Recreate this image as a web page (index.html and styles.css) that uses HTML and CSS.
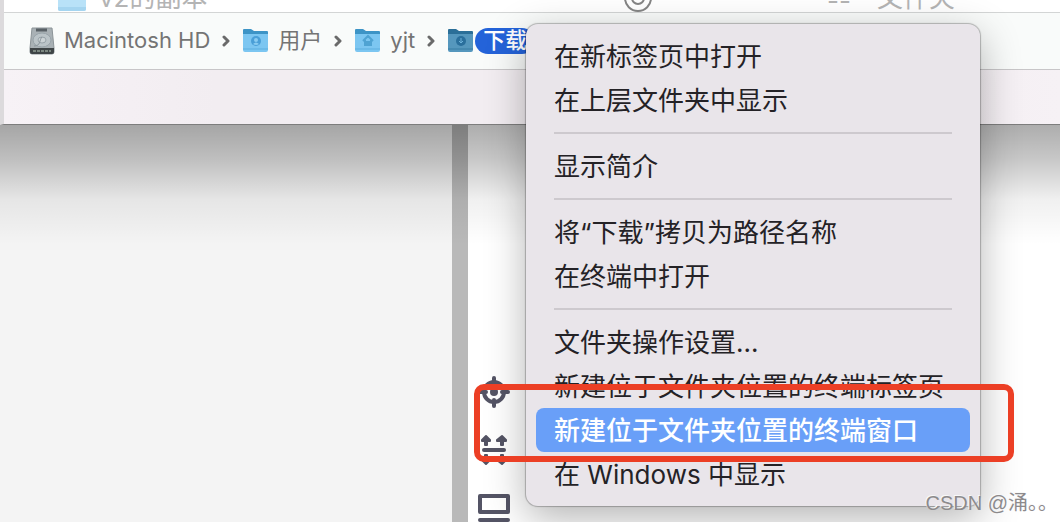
FILE: index.html
```html
<!DOCTYPE html>
<html lang="zh-CN">
<head>
    <meta charset="UTF-8">
    <meta name="viewport" content="width=device-width, initial-scale=1.0">
    <title>访达</title>
    <link rel="stylesheet" href="styles.css">
</head>
<body>
    <section class="finder">
        <div class="file-row">
            <svg class="file-folder" width="30" height="24" viewBox="0 0 30 24"><path d="M1 0h28v21a2 2 0 0 1-2 2H3a2 2 0 0 1-2-2z" fill="#b9e2f8"/><path d="M1 19h28v2a2 2 0 0 1-2 2H3a2 2 0 0 1-2-2z" fill="#a5d5f0"/></svg>
            <span class="file-name">v2的副本</span>
            <svg class="file-sync" width="28" height="28" viewBox="0 0 28 28" fill="none" stroke="#858585" stroke-width="2"><circle cx="14" cy="14" r="13"/><circle cx="14" cy="14" r="6"/></svg>
            <span class="file-size">--</span>
            <span class="file-kind">文件夹</span>
        </div>
        <nav class="path-bar">
            <a href="#" class="crumb">
                <svg width="28" height="28" viewBox="0 0 28 28">
                    <path d="M4 1h20l2 20v4a2 2 0 0 1-2 2H4a2 2 0 0 1-2-2v-4z" fill="#a9b1b5" stroke="#8c9498"/>
                    <path d="M2 21h24v4a2 2 0 0 1-2 2H4a2 2 0 0 1-2-2z" fill="#3f4547"/>
                    <path d="M5 24h18" stroke="#7b8780" stroke-width="2" stroke-dasharray="3 1"/>
                    <path d="M8 3h11" stroke="#596166" stroke-width="3"/>
                    <ellipse cx="14" cy="13" rx="9" ry="7" fill="#bbc4c8" stroke="#98a3a9"/>
                    <ellipse cx="14" cy="13" rx="4" ry="3" fill="#ccd3d6" stroke="#98a3a9"/>
                    <path d="M6 19c7 0 5-6 8-9" fill="none" stroke="#8a959b"/>
                </svg>
                <span>Macintosh HD</span>
            </a>
            <svg class="chevron" width="8" height="12" viewBox="0 0 8 12"><path d="M2 2l4 4-4 4"/></svg>
            <a href="#" class="crumb">
                <svg width="28" height="28" viewBox="0 0 28 28">
                    <path d="M1 3q0-1 1-1h7l3 2h13q1 0 1 1v7H1z" fill="#3d94c6"/>
                    <path d="M1 7h25v16a2 2 0 0 1-2 2H3a2 2 0 0 1-2-2z" fill="#7cc6f1"/>
                    <path d="M1 22h25" stroke="#5cafdf"/>
                    <circle cx="14" cy="14" r="5" fill="#4a9fd7"/>
                    <circle cx="14" cy="13" r="2" fill="#8accf1"/>
                    <path d="M11 17q3-3 6 0q-3 2-6 0z" fill="#8accf1"/>
                </svg>
                <span>用户</span>
            </a>
            <svg class="chevron" width="8" height="12" viewBox="0 0 8 12"><path d="M2 2l4 4-4 4"/></svg>
            <a href="#" class="crumb">
                <svg width="28" height="28" viewBox="0 0 28 28">
                    <path d="M1 3q0-1 1-1h7l3 2h13q1 0 1 1v7H1z" fill="#3d94c6"/>
                    <path d="M1 7h25v16a2 2 0 0 1-2 2H3a2 2 0 0 1-2-2z" fill="#7cc6f1"/>
                    <path d="M1 22h25" stroke="#5cafdf"/>
                    <path d="M9 14l5-5 5 5M11 13v5h2v-3h2v3h2v-5" fill="none" stroke="#4fa3d3" stroke-width="2"/>
                </svg>
                <span>yjt</span>
            </a>
            <svg class="chevron" width="8" height="12" viewBox="0 0 8 12"><path d="M2 2l4 4-4 4"/></svg>
            <a href="#" class="crumb current">
                <svg width="28" height="28" viewBox="0 0 28 28">
                    <path d="M1 3q0-1 1-1h7l3 2h13q1 0 1 1v7H1z" fill="#2b6f98"/>
                    <path d="M1 7h25v16a2 2 0 0 1-2 2H3a2 2 0 0 1-2-2z" fill="#5597bd"/>
                    <path d="M1 22h25" stroke="#397ca3"/>
                    <circle cx="14" cy="14" r="5" fill="#2a6f9c"/>
                    <path d="M14 11v5M12 14l2 2 2-2" fill="none" stroke="#6db2da"/>
                </svg>
                <span class="crumb-label">下载</span>
            </a>
        </nav>
        <div class="status-bar"></div>
    </section>

    <main class="editor">
        <div class="panel"></div>
        <div class="divider"></div>
        <div class="toolbar">
            <button class="tool" aria-label="定位">
                <svg width="32" height="32" viewBox="0 0 32 32" fill="none" stroke="#545465" stroke-width="4" stroke-linecap="round"><circle cx="16" cy="16" r="10"/><path d="M16 2v6M16 24v6M2 16h6M24 16h6"/><circle cx="16" cy="16" r="4" fill="#545465" stroke="none"/></svg>
            </button>
            <button class="tool" aria-label="展开">
                <svg width="32" height="32" viewBox="0 0 32 32" fill="#545465" stroke="#545465" stroke-width="2" stroke-linejoin="round"><path d="M8 2l4 4v1h-3v4H7V7H4V6zM24 2l4 4v1h-3v4h-2V7h-4V6zM8 30l4-4v-1h-3v-4H7v4H4v1zM24 30l4-4v-1h-3v-4h-2v4h-4v1z"/><path d="M6 16h20" stroke-width="4" stroke-linecap="round"/></svg>
            </button>
            <button class="tool" aria-label="设备">
                <svg width="32" height="32" viewBox="0 0 32 32" fill="none" stroke="#545465" stroke-width="4" stroke-linecap="round" stroke-linejoin="round"><path d="M2 4h28v16H2zM2 28h28"/></svg>
            </button>
        </div>
    </main>

    <div class="context-menu" role="menu">
        <button class="menu-item" role="menuitem">在新标签页中打开</button>
        <button class="menu-item" role="menuitem">在上层文件夹中显示</button>
        <hr>
        <button class="menu-item" role="menuitem">显示简介</button>
        <hr>
        <button class="menu-item" role="menuitem">将“下载”拷贝为路径名称</button>
        <button class="menu-item" role="menuitem">在终端中打开</button>
        <hr>
        <button class="menu-item" role="menuitem">文件夹操作设置...</button>
        <button class="menu-item" role="menuitem">新建位于文件夹位置的终端标签页</button>
        <button class="menu-item active" role="menuitem">新建位于文件夹位置的终端窗口</button>
        <button class="menu-item" role="menuitem">在 Windows 中显示</button>
    </div>

    <div class="highlight-box"></div>
    <div class="watermark">CSDN @涌。。</div>
</body>
</html>
```
FILE: styles.css
```css
* {
    box-sizing: border-box;
}
body {
    position: relative;
    display: flex;
    flex-direction: column;
    min-height: 100vh;
    margin: 0;
    overflow: hidden;
    font-family: Inter, "Noto Sans CJK SC", sans-serif;
    background: #fff;
}

/* Finder window */
.finder {
    border-left: 4px solid #dcdadc;
    border-bottom: 1px solid #7d7d7d;
    background: #fff;
}
.file-row {
    display: grid;
    grid-template-columns: 30px 513px 191px 38px 1fr;
    column-gap: 12px;
    align-items: end;
    align-content: end;
    height: 12px;
    padding-left: 53px;
    overflow: hidden;
    font-size: 26px;
    line-height: 28px;
    color: #b4b4b4;
}
.file-size {
    line-height: 22px;
}
.path-bar {
    display: flex;
    align-items: center;
    gap: 12px;
    height: 58px;
    padding-left: 24px;
    border-top: 1px solid #d3d5d5;
    border-bottom: 1px solid #c8c6c8;
    background: #f9fbfa;
    font-size: 22px;
    line-height: 24px;
}
.crumb {
    display: flex;
    align-items: center;
    gap: 8px;
    color: #747474;
    text-decoration: none;
}
.crumb span {
    height: 26px;
}
.current {
    gap: 0;
}
.crumb-label {
    padding: 0 8px;
    border-radius: 13px;
    background: #2463d9;
    color: #fff;
    font-weight: 500;
}
.chevron {
    fill: none;
    stroke: #6a6a6a;
    stroke-width: 3;
    stroke-linecap: round;
    stroke-linejoin: round;
}
.status-bar {
    height: 54px;
    background: linear-gradient(90deg, #f7f2f6, #f2edf1 20%, #f2edf1 80%, #f6f1f5);
}

/* Window behind */
.editor {
    position: relative;
    display: flex;
    flex: 1;
}
.editor::before {
    content: "";
    position: absolute;
    inset: 0 0 auto;
    height: 120px;
    background: linear-gradient(rgba(0, 0, 0, 0.32), rgba(0, 0, 0, 0.22) 28%, rgba(0, 0, 0, 0.06) 62%, transparent);
}
.panel {
    flex: 0 0 452px;
    background: #f4f4f4;
}
.divider {
    flex: 0 0 16px;
    background: #b9b9b9;
}
.toolbar {
    display: flex;
    flex-direction: column;
    justify-content: flex-end;
    gap: 26px;
    margin-bottom: -2px;
    padding-left: 10px;
}
.tool {
    height: 32px;
    padding: 0;
    border: none;
    background: none;
}
.tool svg {
    display: block;
}

/* Context menu */
.context-menu {
    position: absolute;
    top: 24px;
    left: 526px;
    width: 454px;
    padding: 10px;
    border-radius: 12px;
    background: #e9e5ea;
    box-shadow: 0 0 1px 1px rgba(0, 0, 0, 0.25), 0 12px 40px rgba(0, 0, 0, 0.3);
}
.menu-item {
    display: block;
    width: 100%;
    height: 44px;
    padding: 2px 18px 0;
    border: none;
    border-radius: 8px;
    background: none;
    color: #242226;
    font-family: inherit;
    font-size: 26px;
    line-height: 42px;
    text-align: left;
    white-space: nowrap;
}
.menu-item.active {
    background: #699ff8;
    color: #fff;
    font-weight: 500;
}
.context-menu hr {
    height: 2px;
    margin: 10px 18px;
    border: none;
    background: #cdc9ce;
}

.highlight-box {
    position: absolute;
    top: 384px;
    left: 474px;
    width: 540px;
    height: 78px;
    border: 6px solid #ec3f25;
    border-radius: 10px;
}
.watermark {
    position: absolute;
    right: 2px;
    bottom: 6px;
    font-family: "Liberation Sans", "Noto Sans CJK SC", sans-serif;
    font-size: 20px;
    line-height: 26px;
    color: #8c8a8c;
    text-shadow: -1px -1px 0 #f8f8f8;
}
```
